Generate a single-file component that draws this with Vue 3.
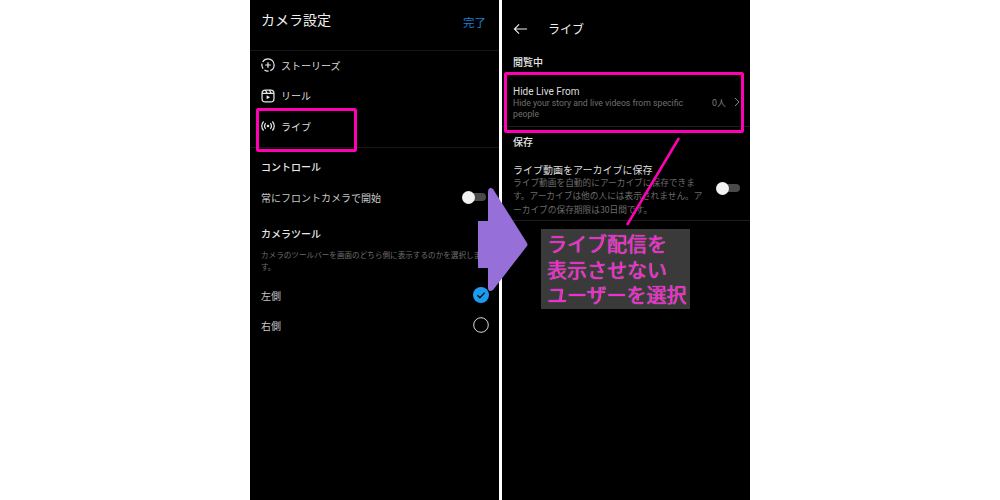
<template>
  <div class="page">
    <div class="stage">
      <section class="phone left">
        <header class="cam-head">
          <h1>カメラ設定</h1>
          <a class="done">完了</a>
        </header>
        <ul class="modes">
          <li>
            <svg viewBox="0 0 16 16" class="ico">
              <circle cx="8" cy="8" r="7" stroke-dasharray="8 2 5 2 6 2 30" />
              <path d="M8 4.800v6.400M4.800 8h6.400" />
            </svg>
            ストーリーズ
          </li>
          <li>
            <svg viewBox="0 0 16 16" class="ico">
              <rect x="1.200" y="1.200" width="13.600" height="13.600" rx="3.600" />
              <path d="M1.200 5h13.600M5 1.200L7 5M9.600 1.200L11.600 5" />
              <path class="solid" d="M6.400 7.200v4.600l4-2.300z" />
            </svg>
            リール
          </li>
          <li>
            <svg viewBox="0 0 16 16" class="ico">
              <circle class="solid" cx="8" cy="8" r="1.500" />
              <path d="M5.400 4.800a4.400 4.400 0 0 0 0 6.400M10.600 4.800a4.400 4.400 0 0 1 0 6.400M3 2.800a7.400 7.400 0 0 0 0 10.400M13 2.800a7.400 7.400 0 0 1 0 10.400" />
            </svg>
            ライブ
          </li>
        </ul>
        <h2 class="sec control">コントロール</h2>
        <div class="row front">
          <span>常にフロントカメラで開始</span>
          <span class="toggle"></span>
        </div>
        <h2 class="sec tools">カメラツール</h2>
        <p class="tool-desc">カメラのツールバーを画面のどちら側に表示するのかを選択します。</p>
        <div class="row side first">
          <span>左側</span>
          <svg viewBox="0 0 16 16" class="radio">
            <circle cx="8" cy="8" r="8" fill="#1d9bf0" />
            <path d="M4.400 8.200l2.500 2.500 4.800-5.100" fill="none" stroke="#0a0a0a" stroke-width="1.300" />
          </svg>
        </div>
        <div class="row side">
          <span>右側</span>
          <svg viewBox="0 0 16 16" class="radio">
            <circle cx="8" cy="8" r="7.300" fill="none" stroke="#d8d8d8" stroke-width="1" />
          </svg>
        </div>
      </section>

      <section class="phone right">
        <header class="live-head">
          <svg viewBox="0 0 16 12" class="back">
            <path d="M15 6H1.500M6.500 1L1.500 6l5 5" />
          </svg>
          <h1>ライブ</h1>
        </header>
        <h2 class="sec viewing">閲覧中</h2>
        <div class="hide-row">
          <div class="hide-text">
            <div class="item-title">Hide Live From</div>
            <div class="item-desc">Hide your story and live videos from specific people</div>
          </div>
          <span class="count">0人</span>
          <svg viewBox="0 0 6 10" class="chev"><path d="M1 1l4 4-4 4" /></svg>
        </div>
        <h2 class="sec saving">保存</h2>
        <div class="archive">
          <div class="archive-text">
            <div class="item-title">ライブ動画をアーカイブに保存</div>
            <div class="archive-desc">ライブ動画を自動的にアーカイブに保存できま<br />す。アーカイブは他の人には表示されません。ア<br />ーカイブの保存期限は30日間です。</div>
          </div>
          <span class="toggle"></span>
        </div>
      </section>

      <!-- 注釈レイヤー -->
      <svg class="marks" viewBox="0 0 1000 500">
        <path class="arrow" d="M478 221h10v-28q0-7 5-4l34 54q1 2 0 3l-34 44q-5 3-5-3v-19h-10z" />
        <rect class="mark" x="257.500" y="109.500" width="98" height="41" rx="1" />
        <rect class="mark" x="505.500" y="73.500" width="237" height="58" rx="1" />
        <path class="line" d="M679 138L627 225" />
      </svg>
      <div class="callout">ライブ配信を<br />表示させない<br />ユーザーを選択</div>
    </div>
  </div>
</template>

<script setup>
</script>

<style>
html, body { margin: 0; background: #fff; }
</style>

<style scoped>
.page {
  width: 1000px;
  height: 500px;
  display: flex;
  justify-content: center;
  background: #fff;
  font-family: "Noto Sans CJK JP", "Liberation Sans", sans-serif;
  overflow: hidden;
}
.stage {
  position: relative;
  width: 500px;
  height: 500px;
  display: flex;
  gap: 3px;
}
.phone {
  height: 500px;
  background: #000;
  color: #e4e4e4;
  box-sizing: border-box;
  overflow: hidden;
}
.left { width: 249px; }
.right { width: 248px; }
h1, h2, p, ul { margin: 0; padding: 0; }
ul { list-style: none; }

.cam-head {
  height: 50px;
  padding: 0 13px 0 11px;
  display: flex;
  justify-content: space-between;
  border-bottom: 1px solid #161616;
}
.cam-head h1 {
  font-size: 14px;
  line-height: 20px;
  margin-top: 9px;
  font-weight: 400;
  color: #f0f0f0;
}
.done {
  font-size: 11.500px;
  line-height: 16px;
  margin-top: 14px;
  color: #1b7fd0;
}
.modes {
  height: 96px;
  padding: 0 0 0 11px;
  border-bottom: 1px solid #161616;
}
.modes li {
  height: 30.500px;
  display: flex;
  align-items: center;
  gap: 6px;
  font-size: 10px;
  color: #dcdcdc;
  position: relative;
  top: -1px;
}
.ico {
  width: 14px;
  height: 14px;
  fill: none;
  stroke: #e8e8e8;
  stroke-width: 1.400;
}
.ico .solid { fill: #e8e8e8; stroke: none; }

.sec {
  font-size: 10px;
  line-height: 14px;
  font-weight: 500;
  color: #e8e8e8;
  padding-left: 11px;
}
.control { margin-top: 12px; }
.row {
  display: flex;
  justify-content: space-between;
  align-items: center;
  padding: 0 10px 0 11px;
  font-size: 10px;
  color: #c8c8c8;
}
.front { height: 24px; margin-top: 11px; }
.tools { margin-top: 18px; }
.tool-desc {
  margin-top: 8px;
  padding-left: 11px;
  width: 224px;
  font-size: 7.600px;
  line-height: 12px;
  color: #6e6e6e;
}
.first { margin-top: 7px; }
.side { height: 30px; }
.radio { width: 16px; height: 16px; }

.toggle {
  position: relative;
  display: block;
  width: 18px;
  height: 8px;
  margin-right: 3px;
  border-radius: 4px;
  background: #4a4a4a;
}
.toggle::before {
  content: "";
  position: absolute;
  left: -6px;
  top: -2.500px;
  width: 13px;
  height: 13px;
  border-radius: 50%;
  background: #f2f2f2;
}

.live-head {
  height: 57px;
  padding-left: 11px;
  display: flex;
  align-items: center;
  box-sizing: border-box;
}
.back {
  width: 15px;
  height: 12px;
  fill: none;
  stroke: #eee;
  stroke-width: 1.200;
}
.live-head h1 {
  margin-left: 20px;
  font-size: 12px;
  font-weight: 400;
  color: #eee;
}
.viewing { margin-top: -2px; }
.hide-row {
  height: 58px;
  padding: 9px 10px 0 11px;
  box-sizing: border-box;
  display: flex;
  align-items: center;
  border-bottom: 1px solid #1c1c1c;
}
.hide-text { width: 190px; }
.item-title {
  font-size: 10px;
  line-height: 13px;
  color: #dedede;
}
.hide-row .item-title { font-family: Roboto, sans-serif; font-size: 10px; }
.item-desc {
  font-family: Roboto, sans-serif;
  font-size: 8.700px;
  line-height: 11px;
  color: #707070;
}
.count {
  font-size: 9px;
  color: #7a7a7a;
  margin: 0 8px 0 10px;
  white-space: nowrap;
}
.chev {
  width: 6px;
  height: 10px;
  fill: none;
  stroke: #8a8a8a;
  stroke-width: 1;
}
.saving { margin-top: 8px; }
.archive {
  height: 58px;
  margin-top: 14px;
  padding: 0 7px 0 11px;
  box-sizing: border-box;
  display: flex;
  border-bottom: 1px solid #1c1c1c;
}
.archive-text { width: 192px; flex-shrink: 0; }
.archive-desc {
  font-size: 8.700px;
  line-height: 13.400px;
  white-space: nowrap;
  color: #6c6c6c;
}
.archive .toggle { margin-top: 21px; margin-left: 17px; }

.marks {
  position: absolute;
  left: -250px;
  top: 0;
  width: 1000px;
  height: 500px;
  pointer-events: none;
}
.arrow { fill: #9670d8; }
.mark {
  fill: none;
  stroke: #ff00b4;
  stroke-width: 3;
}
.line {
  fill: none;
  stroke: #ff00b4;
  stroke-width: 2.500;
}
.callout {
  position: absolute;
  left: 291px;
  top: 229px;
  width: 149px;
  height: 80px;
  box-sizing: border-box;
  padding: 2px 0 0 6px;
  background: #3a3a3a;
  color: #ff20d8;
  font-size: 20px;
  line-height: 25.500px;
  font-weight: 400;
  white-space: nowrap;
  text-shadow: 0 0 1px rgba(255, 255, 255, 0.6);
}
</style>
